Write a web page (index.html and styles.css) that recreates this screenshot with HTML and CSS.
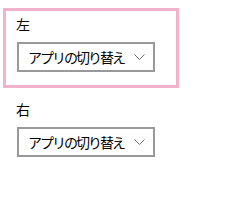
FILE: index.html
```html
<!DOCTYPE html>
<html lang="ja">
<head>
    <meta charset="UTF-8">
    <title>ペン設定</title>
    <link rel="stylesheet" href="styles.css">
</head>
<body>
    <div class="setting selected">
        <div class="label">左</div>
        <div class="combo">
            <span class="combo-text">アプリの切り替え</span>
            <svg class="chevron" width="11" height="6" viewBox="0 0 11 6"><polyline points="0.5,0.5 5.5,5.5 10.5,0.5" fill="none" stroke="#707070" stroke-width="1"/></svg>
        </div>
    </div>

    <div class="setting">
        <div class="label">右</div>
        <div class="combo">
            <span class="combo-text">アプリの切り替え</span>
            <svg class="chevron" width="11" height="6" viewBox="0 0 11 6"><polyline points="0.5,0.5 5.5,5.5 10.5,0.5" fill="none" stroke="#707070" stroke-width="1"/></svg>
        </div>
    </div>
</body>
</html>
```

FILE: styles.css
```css
body {
    margin: 0;
    padding: 8px 0 0 3px;
    background-color: #fff;
    color: #000;
    font-family: "Noto Sans CJK JP", "Noto Sans", sans-serif;
    font-size: 14px;
}

.setting {
    box-sizing: border-box;
    width: 176px;
    height: 80px;
    border: 3px solid transparent;
    padding: 5px 0 0 11px;
}

.setting + .setting {
    margin-top: 5px;
}

.setting.selected {
    border-color: #f2b3ca;
}

.label {
    line-height: 17px;
    margin-left: -1px;
}

.combo {
    box-sizing: border-box;
    width: 138px;
    height: 30px;
    margin-top: 9px;
    border: 2px solid #999;
    padding: 0 8px 0 9px;
    display: flex;
    align-items: center;
    justify-content: space-between;
}

.combo-text {
    letter-spacing: -2px;
    line-height: 17px;
}

.chevron {
    display: block;
}
```
